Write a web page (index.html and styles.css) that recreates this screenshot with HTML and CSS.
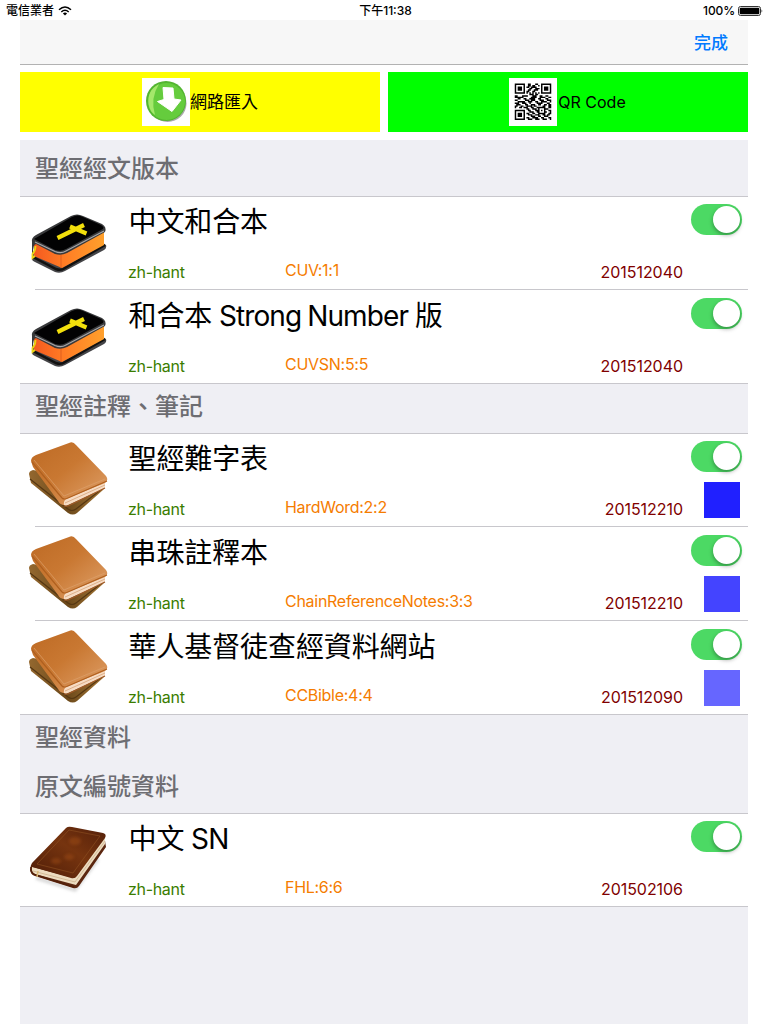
FILE: index.html
```html
<!DOCTYPE html>
<html lang="zh-Hant">
<head>
    <meta charset="UTF-8">
    <meta name="viewport" content="width=device-width, initial-scale=1.0">
    <title>聖經版本</title>
    <link rel="stylesheet" href="styles.css">
</head>
<body>
    <svg width="0" height="0" class="defs">
        <defs>
            <linearGradient id="pages" x1="0" x2="1"><stop offset="0" stop-color="#f45a20"/><stop offset=".4" stop-color="#ff7a24"/><stop offset="1" stop-color="#ffa02c"/></linearGradient>
            <linearGradient id="tan" x1="0" y1="0" x2="1" y2="1"><stop offset="0" stop-color="#bd6a24"/><stop offset=".45" stop-color="#c97832"/><stop offset="1" stop-color="#e0a26c"/></linearGradient>
            <linearGradient id="under" x1="0" x2="1"><stop offset="0" stop-color="#94682f"/><stop offset=".5" stop-color="#6b481a"/><stop offset="1" stop-color="#a67836"/></linearGradient>
            <linearGradient id="leather" x1="0" y1="1" x2="1" y2="0"><stop offset="0" stop-color="#4f1d08"/><stop offset=".55" stop-color="#76340f"/><stop offset="1" stop-color="#54200a"/></linearGradient>
            <filter id="soft" x="-20%" y="-50%" width="140%" height="200%"><feGaussianBlur stdDeviation="1.5"/></filter>

            <symbol id="bible" viewBox="0 0 80 80">
                <path d="M4 50 L4 55 Q4 57 7 58 L27 68 Q32 70 37 67 L76 46 Q79 44 78 41 L72 37z" fill="#444447"/>
                <path d="M5 53 L28 65 Q33 67 37 64 L77 41" fill="none" stroke="#111" stroke-width="2.5"/>
                <path d="M6 36 L33 48 L76 26 L76 41 L34 64 L6 52z" fill="url(#pages)"/>
                <path d="M33 49 V64" stroke="#e0611f"/>
                <path d="M4 50 L4 38 Q3 34 8 31 L43 12 Q49 9 55 12 L74 20 Q79 23 77 28 L39 49 Q33 52 27 50 L8 40 Q5 40 5 50z" fill="#38393b"/>
                <path d="M6 35 L44 13 Q50 10 55 13 L73 21 Q78 24 73 26 L38 45 Q33 48 27 46z" fill="#020203"/>
                <path d="M7 38 L27 47.5 Q33 50 38 47 L76 27" fill="none" stroke="#a6a7aa" stroke-width="1.1"/>
                <path d="M29.5 34 L56 21 M42 22.5 L58.5 29.5" fill="none" stroke="#f2df0c" stroke-width="4.2"/>
                <path d="M7.5 42 Q7.5 47 4.5 50 L4.5 54 L7 52" fill="none" stroke="#ead313" stroke-width="1.8"/>
            </symbol>

            <symbol id="books" viewBox="0 0 80 80">
                <path d="M1 33 Q1 30 5 29 L40 36 L76 43 Q78 46 75 49 L49 72 Q45 75 40 72 L3 42z" fill="url(#under)"/>
                <path d="M2 38 L40 68 Q44 71 48 68 L74 48" fill="none" stroke="#563712" stroke-width="1.2"/>
                <path d="M34 59 L77 41 L77 47 L40 64 Q36 66 34 62z" fill="#f7dcc4"/>
                <path d="M37 62 L77 44" stroke="#d6a47b" stroke-width=".8"/>
                <path d="M3 20 Q3 16 8 14 L41 2 Q45 0 48 4 L78 35 Q81 39 77 42 L40 57 Q35 59 36 64 Q32 64 30 60 L5 26z" fill="url(#tan)"/>
                <path d="M4 21 L34 57 Q36 59 40 57 L79 40" fill="none" stroke="#b0601f" stroke-width="1.2"/>
                <path d="M6 19 L36 55 L77 38" fill="none" stroke="#dca06c" stroke-width=".7"/>
                <path d="M36 64.5 Q38 66 41 64.5 L77 47" fill="none" stroke="#a05a28" stroke-width="1.2"/>
            </symbol>

            <symbol id="brown" viewBox="0 0 80 80">
                <path d="M8 57 L47 69 L70 38" fill="none" stroke="#aaa" stroke-width="3" opacity=".5" filter="url(#soft)"/>
                <path d="M3 44 L2 49 Q3 54 7 55 L45 67 Q49 68 51 65 L78 26 L77 20z" fill="#5c2710"/>
                <path d="M4 46 L46 57 L77 16 L77 23 L48 64 L7 53 Q3 51 4 46z" fill="#eddcc0"/>
                <path d="M5 50 L47 61 L77 20" fill="none" stroke="#c9ad86" stroke-width=".7"/>
                <path d="M38 7 Q40 5 44 6 L75 12 Q79 13 77 17 L49 55 Q47 58 43 57 L5 46 Q2 45 4 42z" fill="url(#leather)"/>
                <path d="M41 9 L72 15 L45 52 L9 43z" fill="none" stroke="#8f5122" stroke-width=".6"/>
                <g fill="#a35018" opacity=".45" filter="url(#soft)"><ellipse cx="47" cy="20" rx="6" ry="4"/><ellipse cx="41" cy="36" rx="5" ry="3"/><ellipse cx="28" cy="40" rx="5" ry="3"/></g>
                <path d="M3 46 Q2 53 8 54 L46 66" fill="none" stroke="#542009" stroke-width="1.5"/>
                <path d="M10 50 L9 56" stroke="#d9b877" stroke-width="1.5"/>
            </symbol>
        </defs>
    </svg>

    <header class="status">
        <div class="carrier">電信業者
            <svg class="wifi" width="14" height="10" viewBox="0 0 14 10"><g fill="none" stroke="#000" stroke-width="1.5"><path d="M1 3.8 Q7 -1.8 13 3.8"/><path d="M3.3 6 Q7 2.6 10.7 6"/></g><path d="M4.9 7.4 Q7 5.7 9.1 7.4 L7 9.6z"/></svg>
        </div>
        <div class="clock">下午11:38</div>
        <div class="power">100%
            <svg width="25" height="10" viewBox="0 0 25 10"><rect x=".5" y=".5" width="22" height="9" rx="2" fill="#fff" stroke="#333"/><rect x="1.7" y="1.7" width="19.6" height="6.6" rx="1"/><path d="M23.6 3.2 Q25 5 23.6 6.8z"/></svg>
        </div>
    </header>

    <main class="page">
        <nav class="navbar"><a class="done">完成</a></nav>

        <div class="buttons">
            <div class="btn yellow">
                <svg class="btn-icon" viewBox="0 0 48 48">
                    <rect width="48" height="48" fill="#fff"/>
                    <ellipse cx="25.5" cy="25.5" rx="19" ry="18.5" fill="#aaa"/>
                    <circle cx="24" cy="23" r="20" fill="#53b531"/>
                    <circle cx="24.5" cy="23.5" r="18.5" fill="#65cc3d"/>
                    <path d="M17 6 Q5 12 6.5 26 Q8 34 13 37 Q8 20 17 6z" fill="#a4e86b"/>
                    <path d="M21 9.5 L31 10 L32 21 L39 22 L30 33.5 L15.5 23.5 L22 21.5z" fill="#fff" stroke="#fff" stroke-width="1" stroke-linejoin="round"/>
                </svg>
                <span class="btn-text">網路匯入</span>
            </div>
            <div class="btn green">
                <svg class="btn-icon" viewBox="0 0 48 48"><rect width="48" height="48" fill="#fff"/><path id="qrDots"/></svg>
                <span class="latin">QR Code</span>
            </div>
        </div>

        <div class="list">
            <h2 class="section first">聖經經文版本</h2>
            <div class="row">
                <svg class="icon"><use href="#bible"/></svg>
                <div class="info">
                    <div class="title">中文和合本</div>
                    <div class="meta"><span class="lang">zh-hant</span><span class="code">CUV:1:1</span><span class="date">201512040</span></div>
                </div>
                <div class="side"><div class="switch"></div></div>
            </div>
            <div class="row">
                <svg class="icon"><use href="#bible"/></svg>
                <div class="info">
                    <div class="title">和合本 <span class="en">Strong Number</span> 版</div>
                    <div class="meta"><span class="lang">zh-hant</span><span class="code">CUVSN:5:5</span><span class="date">201512040</span></div>
                </div>
                <div class="side"><div class="switch"></div></div>
            </div>

            <h2 class="section">聖經註釋、筆記</h2>
            <div class="row">
                <svg class="icon"><use href="#books"/></svg>
                <div class="info">
                    <div class="title">聖經難字表</div>
                    <div class="meta"><span class="lang">zh-hant</span><span class="code">HardWord:2:2</span><span class="date">201512210</span></div>
                </div>
                <div class="side"><div class="switch"></div><div class="swatch blue1"></div></div>
            </div>
            <div class="row">
                <svg class="icon"><use href="#books"/></svg>
                <div class="info">
                    <div class="title">串珠註釋本</div>
                    <div class="meta"><span class="lang">zh-hant</span><span class="code">ChainReferenceNotes:3:3</span><span class="date">201512210</span></div>
                </div>
                <div class="side"><div class="switch"></div><div class="swatch blue2"></div></div>
            </div>
            <div class="row">
                <svg class="icon"><use href="#books"/></svg>
                <div class="info">
                    <div class="title">華人基督徒查經資料網站</div>
                    <div class="meta"><span class="lang">zh-hant</span><span class="code">CCBible:4:4</span><span class="date">201512090</span></div>
                </div>
                <div class="side"><div class="switch"></div><div class="swatch blue3"></div></div>
            </div>

            <h2 class="section">聖經資料</h2>
            <h2 class="section">原文編號資料</h2>
            <div class="row">
                <svg class="icon"><use href="#brown"/></svg>
                <div class="info">
                    <div class="title">中文 <span class="en">SN</span></div>
                    <div class="meta"><span class="lang">zh-hant</span><span class="code">FHL:6:6</span><span class="date">201502106</span></div>
                </div>
                <div class="side"><div class="switch"></div></div>
            </div>
        </div>
    </main>
    <script src="script.js"></script>
</body>
</html>
```
FILE: styles.css
```css
* {
  box-sizing: border-box;
}

body {
  margin: 0;
  height: 1024px;
  overflow: hidden;
  display: flex;
  flex-direction: column;
  background-color: #fff;
  color: #000;
  font-family: Inter, "Noto Sans CJK TC", sans-serif;
}

.defs {
  position: absolute;
}

.status {
  height: 20px;
  padding: 1px 5px 0 6px;
  display: grid;
  grid-template-columns: 1fr auto 1fr;
  align-items: center;
  font-size: 12px;
  line-height: 19px;
  font-weight: 500;
  white-space: nowrap;
}

.carrier,
.power {
  display: flex;
  align-items: center;
  gap: 4px;
}

.power {
  justify-content: flex-end;
  gap: 3px;
  letter-spacing: -0.1px;
}

.clock {
  padding-left: 2px;
}

.page {
  flex: 1;
  margin: 0 20px;
  display: flex;
  flex-direction: column;
}

.navbar {
  height: 45px;
  padding: 0 20px 2px;
  display: flex;
  align-items: center;
  justify-content: flex-end;
  background-color: #f7f7f7;
  border-bottom: 1px solid #b2b2b2;
}

.done {
  color: #007aff;
  font-size: 17px;
  font-weight: 500;
}

.buttons {
  display: grid;
  grid-template-columns: 1fr 1fr;
  gap: 8px;
  padding: 7px 0 8px;
}

.btn {
  height: 60px;
  display: flex;
  align-items: center;
  justify-content: center;
  font-size: 17px;
}

.btn-icon {
  width: 48px;
  height: 48px;
}

.btn-text {
  padding-bottom: 3px;
}

.yellow {
  background-color: #ffff00;
}

.green {
  background-color: #00ff00;
  padding-right: 1px;
}

.latin {
  font-size: 16px;
  padding-left: 1px;
}

.list {
  flex: 1;
  background-color: #efeff4;
}

.section {
  margin: 0;
  height: 49px;
  padding: 0 15px;
  color: #6d6d72;
  font-size: 24px;
  font-weight: 500;
  line-height: 45px;
}

.first {
  height: 56px;
  line-height: 58px;
}

.row {
  position: relative;
  height: 94px;
  padding: 7px 5px 0 8px;
  display: flex;
  background-color: #fff;
  border-bottom: 1px solid #c8c7cc;
}

.section + .row {
  border-top: 1px solid #c8c7cc;
}

.row:not(.section + .row) {
  padding-top: 8px;
}

/* separators between rows start after the 15px inset */
.row:has(+ .row)::after {
  content: "";
  position: absolute;
  left: 0;
  bottom: -1px;
  width: 15px;
  height: 1px;
  background-color: #fff;
}

.icon {
  width: 80px;
  height: 80px;
}

.info {
  width: 555px;
  margin-left: 20px;
}

.title {
  height: 34px;
  padding-left: 0.5px;
  font-size: 28px;
  line-height: 36px;
  letter-spacing: -0.1px;
  word-spacing: -1px;
  white-space: nowrap;
}

.en {
  letter-spacing: -0.9px;
}

.meta {
  display: grid;
  grid-template-columns: 157px 1fr auto;
  margin-top: 24px;
  font-size: 16px;
  line-height: 20px;
  letter-spacing: -0.32px;
}

.lang {
  color: #3a7d00;
}

.code {
  color: #f57c00;
  margin-top: -2px;
  letter-spacing: -0.28px;
}

.date {
  color: #800000;
  letter-spacing: -0.05px;
}

.side {
  width: 59px;
  padding-left: 8px;
}

.switch {
  width: 51px;
  height: 31px;
  padding: 2px;
  display: flex;
  justify-content: flex-end;
  border-radius: 16px;
  background-color: #4cd964;
}

.switch::after {
  content: "";
  width: 27px;
  height: 27px;
  border-radius: 50%;
  background-color: #fff;
  box-shadow: 0 2px 4px rgba(0, 0, 0, 0.35);
}

.swatch {
  width: 36px;
  height: 36px;
  margin: 10px 0 0 13px;
}

.blue1 {
  background-color: #2020ff;
}

.blue2 {
  background-color: #4444ff;
}

.blue3 {
  background-color: #6666ff;
}
```
FILE: script.js
```javascript
const modules = [
    '1111111001100011001111111',
    '1000001001101100101000001',
    '1011101011011110001011101',
    '1011101000110011101011101',
    '1011101001100111001011101',
    '1000001011001100001000001',
    '1111111010101010101111111',
    '0000000000111011000000000',
    '1100011110001110011001100',
    '1111110000011110011110011',
    '0011001100111100110001100',
    '1100000111011100011100111',
    '0011111001110011001111001',
    '1110011100100001111000110',
    '0111000110011100110011011',
    '1100110011110110000110011',
    '1001101110011001111110011',
    '0000000011001110100011100',
    '1111111001100011101010011',
    '1000001000111001100011001',
    '1011101011001100111110011',
    '1011101001110011100110110',
    '1011101000011100110011100',
    '1000001011001111001100011',
    '1111111001110011100111001'
];

const size = 36.5 / modules.length;
let d = '';

modules.forEach((line, y) => {
    [...line].forEach((bit, x) => {
        if (bit === '1') {
            d += `M${5.75 + x * size} ${5.5 + y * size}h${size}v${size}h${-size}z`;
        }
    });
});

document.querySelector('#qrDots').setAttribute('d', d);
```
